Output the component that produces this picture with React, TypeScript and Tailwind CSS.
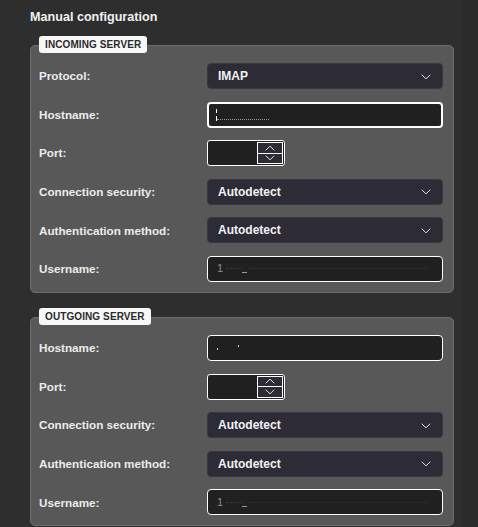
import React from "react";

const Chevron = ({ up = false, className = "" }: { up?: boolean; className?: string }) => (
  <svg width="10" height="6" viewBox="0 0 10 6" className={className}>
    <polyline
      points={up ? "1,5 5,1.2 9,5" : "1,1 5,4.8 9,1"}
      fill="none"
      stroke="#dedede"
      strokeWidth="1"
      strokeLinecap="round"
      strokeLinejoin="round"
    />
  </svg>
);

const Label = ({ children }: { children: React.ReactNode }) => (
  <div className="flex h-[26px] items-center text-[11.7px] font-bold text-[#ececec]">{children}</div>
);

const Select = ({ value }: { value: string }) => (
  <div className="flex h-[26px] items-center justify-between rounded-[4px] border border-[#3a3942] bg-[#2c2b36] pl-[10px] pr-[11px] text-[12px] font-bold text-[#f2f2f2]">
    <span>{value}</span>
    <Chevron className="mt-[1px]" />
  </div>
);

const Port = () => (
  <div className="flex h-[26px] w-[78px] items-center justify-end rounded-[3px] border border-white bg-[#202020] pr-[1px]">
    <div className="flex h-[22px] w-[26px] flex-col border border-white bg-[#2c2b36]">
      <div className="flex flex-1 items-center justify-center border-b border-white">
        <Chevron up />
      </div>
      <div className="flex flex-1 items-center justify-center">
        <Chevron />
      </div>
    </div>
  </div>
);

const HostIncoming = () => (
  <div className="flex h-[26px] flex-col justify-center rounded-[4px] border-2 border-white bg-[#202020] pl-[7px]">
    <div className="h-[4px] w-[1px] bg-white" />
    <div className="mt-[3px] flex items-end">
      <div className="h-[5px] w-[1px] bg-white" />
      <div className="mb-[1px] w-[52px] border-b border-dotted border-[#9a9a9a]" />
    </div>
  </div>
);

const HostOutgoing = () => (
  <div className="flex h-[26px] items-center rounded-[4px] border border-white bg-[#202020] pl-[9px]">
    <div className="mt-[2px] h-[2px] w-[1px] bg-[#cfcfcf]" />
    <div className="-mt-[3px] ml-[20px] h-[2px] w-[1px] bg-[#cfcfcf]" />
  </div>
);

const User = () => (
  <div className="flex h-[26px] items-center rounded-[4px] border border-white bg-[#202020] pl-[9px] text-[11px] text-[#8c8c8c]">
    <span className="leading-none">1</span>
    <div className="ml-[3px] w-[16px] border-b border-dotted border-[#3c3c3c]" />
    <div className="mt-[8px] h-[1px] w-[5px] bg-[#9a9a9a]" />
    <div className="ml-[1px] w-[180px] border-b border-dotted border-[#333]" />
  </div>
);

const Panel = ({
  title,
  rows,
  className = "",
}: {
  title: string;
  rows: [string, React.ReactNode][];
  className?: string;
}) => (
  <div className={`rounded-[5px] border border-[#6c6c6c] bg-[#585858] pb-[10px] pl-[8px] pr-[10px] ${className}`}>
    <div className="-mt-[10px] flex">
      <div className="flex h-[17px] items-center rounded-[3px] bg-[#f7f7f7] px-[6px] text-[10px] font-bold tracking-[0.1px] text-[#2a2a2a]">
        {title}
      </div>
    </div>
    <div className="mt-[10px] grid grid-cols-[168px_236px] gap-y-[12.6px]">
      {rows.map(([label, ctrl], i) => (
        <React.Fragment key={i}>
          <Label>{label}</Label>
          <div>{ctrl}</div>
        </React.Fragment>
      ))}
    </div>
  </div>
);

export default function App() {
  return (
    <div
      className="flex min-h-[527px] w-[478px]"
      style={{ fontFamily: '"Liberation Sans", Arial, sans-serif' }}
    >
      <div className="w-[462px] bg-[#2e2e2e] pl-[30px] pr-[8px] pt-[9px]">
        <div className="h-[16px] text-[12.6px] font-bold leading-[16px] text-[#f0f0f0]">Manual configuration</div>
        <Panel
          className="mt-[20px]"
          title="INCOMING SERVER"
          rows={[
            ["Protocol:", <Select value="IMAP" />],
            ["Hostname:", <HostIncoming />],
            ["Port:", <Port />],
            ["Connection security:", <Select value="Autodetect" />],
            ["Authentication method:", <Select value="Autodetect" />],
            ["Username:", <User />],
          ]}
        />
        <Panel
          className="mt-[24px]"
          title="OUTGOING SERVER"
          rows={[
            ["Hostname:", <HostOutgoing />],
            ["Port:", <Port />],
            ["Connection security:", <Select value="Autodetect" />],
            ["Authentication method:", <Select value="Autodetect" />],
            ["Username:", <User />],
          ]}
        />
      </div>
      <div className="flex-1 bg-[#2a2a2a]" />
    </div>
  );
}
